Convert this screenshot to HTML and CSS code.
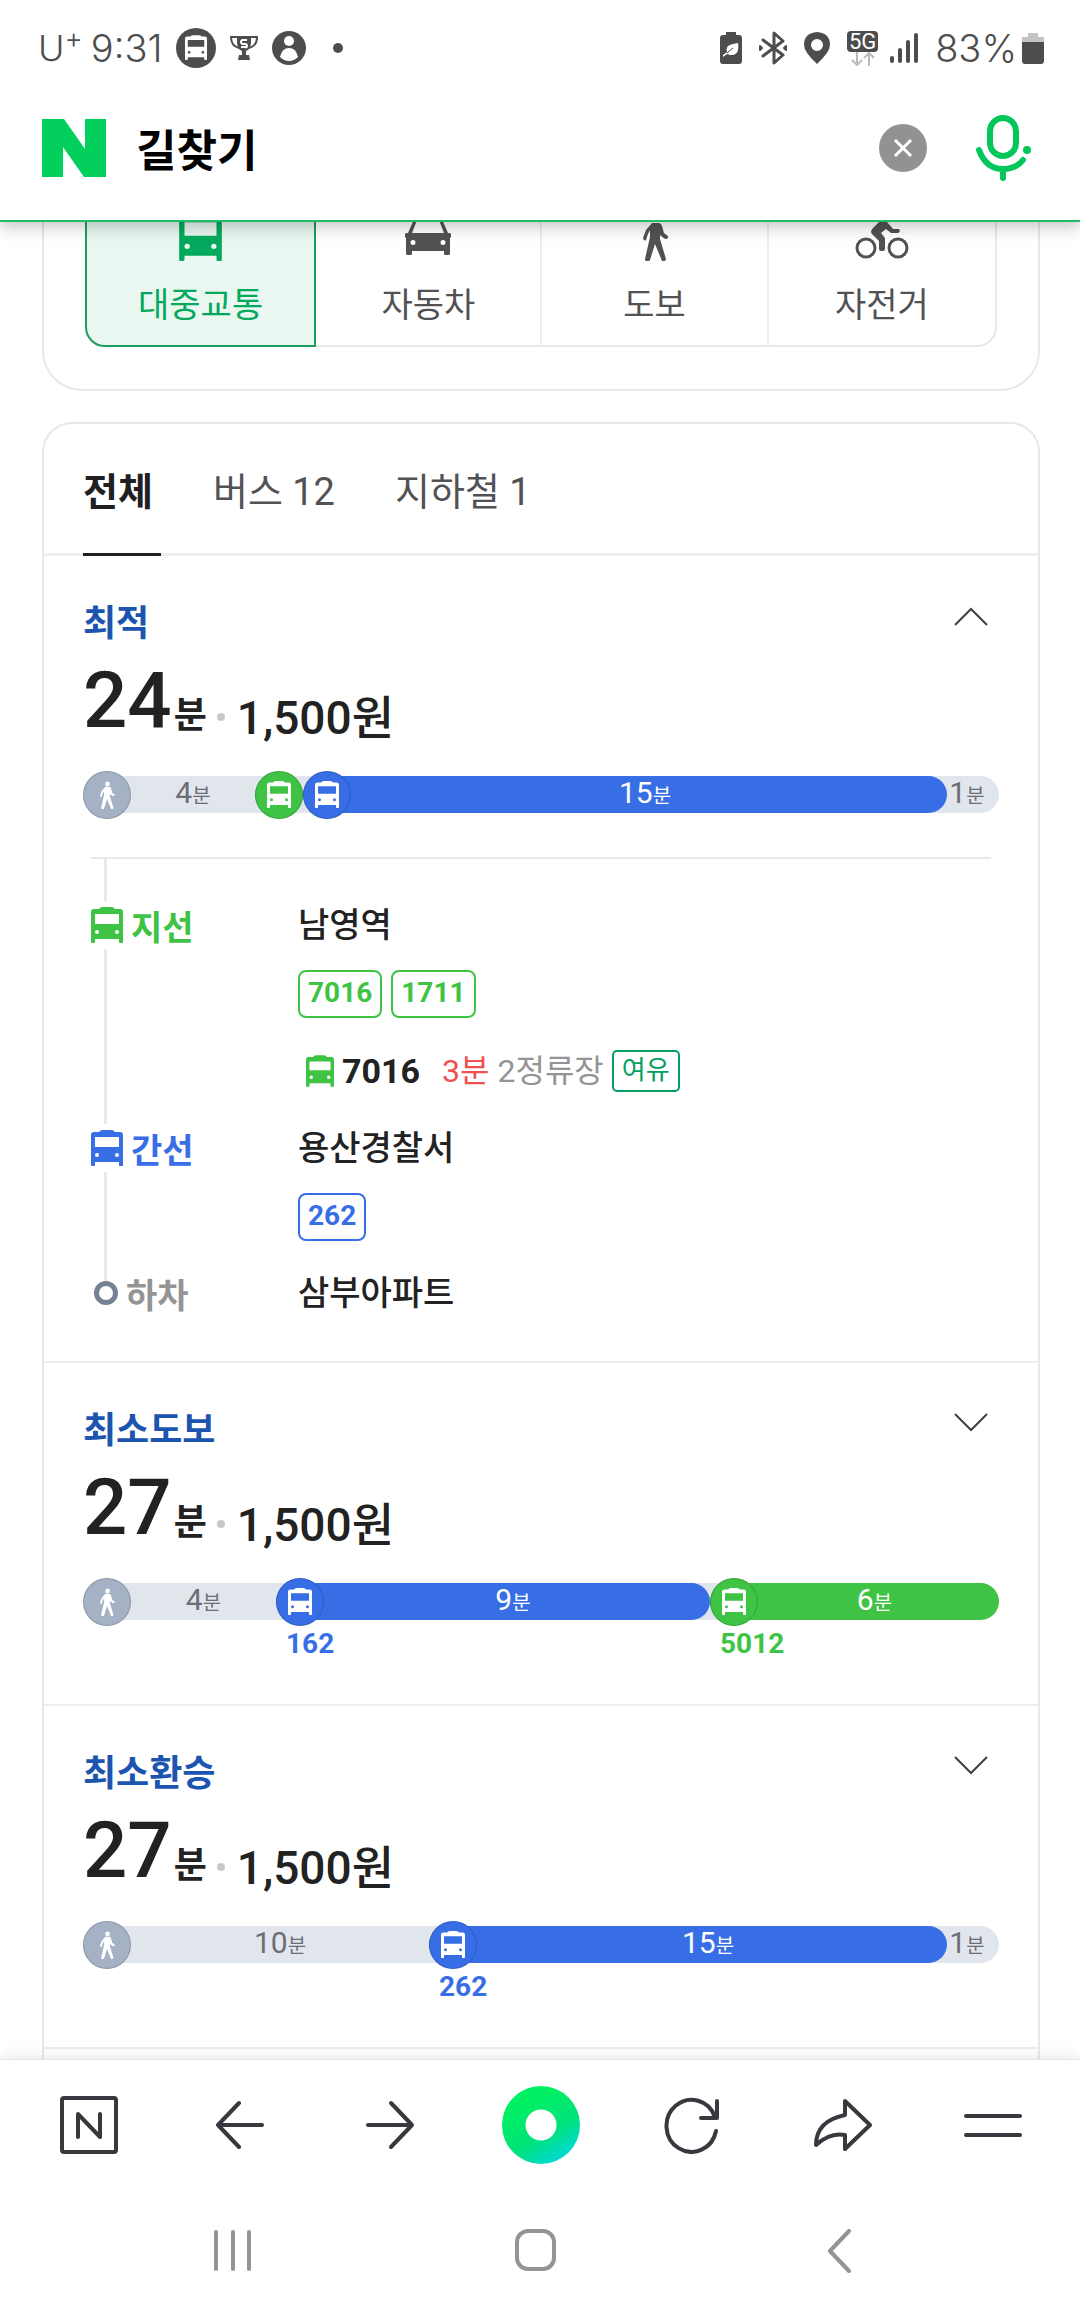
FILE: index.html
```
<!DOCTYPE html>
<html lang="ko">
<head>
  <meta charset="UTF-8">
  <meta name="viewport" content="width=device-width, initial-scale=1.0">
  <title>길찾기</title>
  <link rel="stylesheet" href="styles.css">
</head>
<body>
  <!-- Shared icons -->
  <svg class="sprite" aria-hidden="true">
    <symbol id="bus" viewBox="0 0 32 36">
      <path fill-rule="evenodd" d="M3 2h5q1-2 4-2h8q3 0 4 2h5q3 0 3 3v30q0 1-1 1h-2q-1 0-1-1v-3H4v3q0 1-1 1H1q-1 0-1-1V5q0-3 3-3zM4 7v10h24V7zM6 23a2 2 0 1 0 0 4a2 2 0 1 0 0-4zM26 23a2 2 0 1 0 0 4a2 2 0 1 0 0-4z"/>
    </symbol>
    <symbol id="walk" viewBox="0 0 26 48">
      <circle cx="14" cy="5" r="4"/>
      <path d="M10 10h7q2 0 3 3l2 7 4 3q1 1 0 2t-3 1l-4-3-1-1v4l6 20q0 2-2 2h-2l-7-17-5 16q0 1-2 1H4q-1 0-1-2l5-22v-7l-2 4-2 6q-1 1-2 0t-1-2l3-8z"/>
    </symbol>
    <symbol id="chevron" viewBox="0 0 34 32">
      <path d="M1 25L17 9l16 16" fill="none" stroke="currentColor" stroke-width="2"/>
    </symbol>
  </svg>

  <div class="app">
    <div class="status">
      <div class="status-left">
        <span class="carrier">U<sup>+</sup></span>
        <span class="time">9:31</span>
        <svg width="40" height="40" viewBox="0 0 40 40"><circle cx="20" cy="20" r="20"/><use href="#bus" x="9" y="7" width="22" height="25" fill="#fff"/></svg>
        <svg width="28" height="24" viewBox="0 0 28 24"><path d="M7 0h14v6q0 7-5 9v4h3l1 5H8l1-5h3v-4q-5-2-5-9z"/><path d="M7 1H1q0 9 8 11M21 1h6q0 9-8 11" fill="none" stroke="#4d4d4d" stroke-width="2"/><path d="M17 4h-4q-2 0-2 2t2 2h2q2 0 2 2t-2 1h-4" fill="none" stroke="#fff" stroke-width="2"/></svg>
        <svg width="34" height="34" viewBox="0 0 34 34"><circle cx="17" cy="17" r="17"/><circle cx="17" cy="10" r="5" fill="#fff"/><path d="M8 26q2-9 9-9t9 9q-4 4-9 4t-9-4z" fill="#fff"/></svg>
        <span class="dot"></span>
      </div>
      <div class="status-right">
        <svg width="22" height="32" viewBox="0 0 22 32"><path d="M6 0h10v3h3q3 0 3 3v23q0 3-3 3H3q-3 0-3-3V6q0-3 3-3h3z"/><path d="M18 11q2 13-8 12l-3-1-4 3v-2l4-3q-2-7 6-8z" fill="#fff"/><path d="M7 21l6-5" stroke="#4d4d4d"/></svg>
        <svg width="28" height="34" viewBox="0 0 28 34" fill="none" stroke="#4d4d4d" stroke-width="3" stroke-linecap="round" stroke-linejoin="round"><path d="M4 9l20 15-9 8V2l9 8L4 25"/><path d="M1 15l2 2-2 2zM27 15l-2 2 2 2z" stroke-width="2"/></svg>
        <svg width="26" height="32" viewBox="0 0 26 32"><path fill-rule="evenodd" d="M13 0q13 1 13 13 0 7-13 19Q0 20 0 13 0 1 13 0zM13 7a6 6 0 1 0 0 12a6 6 0 1 0 0-12z"/></svg>
        <span class="network">
          <b>5G</b>
          <svg width="24" height="14" viewBox="0 0 24 14" fill="none" stroke="#bbb" stroke-width="2"><path d="M6 0v12M1 8l5 5 5-5M18 14V2M13 6l5-5 5 5"/></svg>
        </span>
        <svg width="28" height="30" viewBox="0 0 28 30" fill="none" stroke="#4d4d4d" stroke-width="4" stroke-linecap="round"><path d="M2 25v3M10 17v11M18 9v19M26 2v26"/></svg>
        <span class="battery">83%<svg width="22" height="31" viewBox="0 0 22 31"><path d="M6 0h10v4h6v6H0V4h6z" fill="#c4c4c4"/><path d="M0 9h22v19q0 3-3 3H3q-3 0-3-3z"/></svg></span>
      </div>
    </div>

    <header class="search">
      <a class="logo" href="#" aria-label="NAVER"><svg width="64" height="58" viewBox="0 0 64 58"><path d="M0 0h22l21 30V0h21v58H42L21 28v30H0z" fill="#03cf5d"/></svg></a>
      <input class="search-input" type="text" value="길찾기" aria-label="검색어">
      <button class="clear" type="button" aria-label="지우기"><svg width="48" height="48" viewBox="0 0 48 48"><circle cx="24" cy="24" r="24" fill="#929294"/><path d="M16 16l16 16M32 16L16 32" stroke="#fff" stroke-width="3"/></svg></button>
      <button class="mic" type="button" aria-label="음성 검색"><svg width="56" height="68" viewBox="0 0 56 68" fill="none" stroke="#03c75a" stroke-width="6" stroke-linecap="round"><rect x="14" y="4" width="26" height="38" rx="13"/><path d="M3 36q7 19 24 19 13 0 20-9M27 55v9"/><circle cx="51" cy="36" r="4" fill="#03c75a" stroke="none"/></svg></button>
    </header>

    <main class="content">
      <section class="card mode-card">
        <div class="modes">
          <button class="mode active" type="button">
            <svg width="43" height="48"><use href="#bus"/></svg>대중교통
          </button>
          <button class="mode" type="button">
            <svg width="46" height="48" viewBox="0 0 46 48"><path fill-rule="evenodd" d="M10 4q1-2 4-2h18q3 0 4 2l7 16h2q1 0 1 2v2l-1 1v16q0 1-2 1h-3q-1 0-1-1v-3H7v3q0 1-1 1H3q-2 0-2-1V25l-1-1v-2q0-2 1-2h2zM12 7L7 20h32L34 7zM8 27a2 2 0 1 0 0 5a2 2 0 1 0 0-5zM38 27a2 2 0 1 0 0 5a2 2 0 1 0 0-5z"/></svg>자동차
          </button>
          <button class="mode" type="button">
            <svg width="26" height="48"><use href="#walk"/></svg>도보
          </button>
          <button class="mode" type="button">
            <svg width="54" height="48" viewBox="0 0 54 48"><g fill="none" stroke="#525254" stroke-width="3"><circle cx="11" cy="35" r="9"/><circle cx="43" cy="35" r="9"/></g><circle cx="33" cy="3" r="4"/><path d="M24 9q4-4 8 0l6 7h6q2 3-1 4h-7l-5-4-5 4 4 5v11q0 2-2 2h-2q-2 0-2-2v-8l-6-6q-4-3 0-7z"/></svg>자전거
          </button>
        </div>
      </section>

      <section class="card results">
        <div class="tabs" role="tablist">
          <button class="tab active" role="tab" aria-selected="true" type="button">전체</button>
          <button class="tab" role="tab" type="button">버스 12</button>
          <button class="tab" role="tab" type="button">지하철 1</button>
        </div>

        <article class="route open">
          <div class="route-head">
            <h2>최적</h2>
            <button class="toggle" type="button" aria-label="접기"><svg width="34" height="32"><use href="#chevron"/></svg></button>
          </div>
          <div class="summary">
            <strong>24</strong><span class="unit">분</span><i></i><span class="fare">1,500원</span>
          </div>
          <div class="timeline" style="--cols: 172fr 48fr 644fr 52fr">
            <div class="bar">
              <div class="seg walk"><span class="pin"><svg width="16" height="28"><use href="#walk"/></svg></span><span class="min">4<small>분</small></span></div>
              <div class="seg green"><span class="pin"><svg width="24" height="27"><use href="#bus"/></svg></span></div>
              <div class="seg blue"><span class="pin"><svg width="24" height="27"><use href="#bus"/></svg></span><span class="min">15<small>분</small></span></div>
              <div class="seg last"><span class="min">1<small>분</small></span></div>
            </div>
          </div>

          <ol class="steps">
            <li class="step">
              <div class="kind green-text">
                <span class="kind-name"><svg width="32" height="36"><use href="#bus"/></svg>지선</span>
              </div>
              <div class="stop">
                <h3>남영역</h3>
                <div class="numbers green-text"><span>7016</span><span>1711</span></div>
                <p class="arrival">
                  <svg width="28" height="32"><use href="#bus"/></svg>
                  <b>7016</b>
                  <em>3분</em>
                  <span>2정류장</span>
                  <span class="seat">여유</span>
                </p>
              </div>
            </li>
            <li class="step transfer">
              <div class="kind blue-text">
                <span class="kind-name"><svg width="32" height="36"><use href="#bus"/></svg>간선</span>
              </div>
              <div class="stop">
                <h3>용산경찰서</h3>
                <div class="numbers blue-text"><span>262</span></div>
              </div>
            </li>
            <li class="step end">
              <div class="kind">
                <span class="kind-name">하차</span>
              </div>
              <div class="stop">
                <h3>삼부아파트</h3>
              </div>
            </li>
          </ol>
        </article>

        <article class="route">
          <div class="route-head">
            <h2>최소도보</h2>
            <button class="toggle" type="button" aria-label="펼치기"><svg width="34" height="32"><use href="#chevron"/></svg></button>
          </div>
          <div class="summary">
            <strong>27</strong><span class="unit">분</span><i></i><span class="fare">1,500원</span>
          </div>
          <div class="timeline" style="--cols: 193fr 434fr 289fr">
            <div class="bar">
              <div class="seg walk"><span class="pin"><svg width="16" height="28"><use href="#walk"/></svg></span><span class="min">4<small>분</small></span></div>
              <div class="seg blue"><span class="pin"><svg width="24" height="27"><use href="#bus"/></svg></span><span class="min">9<small>분</small></span></div>
              <div class="seg green"><span class="pin"><svg width="24" height="27"><use href="#bus"/></svg></span><span class="min">6<small>분</small></span></div>
            </div>
            <div class="lines">
              <span></span>
              <span class="blue-text">162</span>
              <span class="green-text">5012</span>
            </div>
          </div>
        </article>

        <article class="route">
          <div class="route-head">
            <h2>최소환승</h2>
            <button class="toggle" type="button" aria-label="펼치기"><svg width="34" height="32"><use href="#chevron"/></svg></button>
          </div>
          <div class="summary">
            <strong>27</strong><span class="unit">분</span><i></i><span class="fare">1,500원</span>
          </div>
          <div class="timeline" style="--cols: 346fr 518fr 52fr">
            <div class="bar">
              <div class="seg walk"><span class="pin"><svg width="16" height="28"><use href="#walk"/></svg></span><span class="min">10<small>분</small></span></div>
              <div class="seg blue"><span class="pin"><svg width="24" height="27"><use href="#bus"/></svg></span><span class="min">15<small>분</small></span></div>
              <div class="seg last"><span class="min">1<small>분</small></span></div>
            </div>
            <div class="lines">
              <span></span>
              <span class="blue-text">262</span>
            </div>
          </div>
        </article>
      </section>
    </main>

    <footer class="footer">
      <nav class="toolbar">
        <button type="button" aria-label="네이버 홈"><svg width="58" height="58" viewBox="0 0 58 58"><rect x="2" y="2" width="54" height="54" rx="2"/><path d="M18 41V18l22 23V18"/></svg></button>
        <button type="button" aria-label="뒤로"><svg width="50" height="50" viewBox="0 0 50 50"><path d="M24 3L3 25l21 22M3 25h44"/></svg></button>
        <button type="button" aria-label="앞으로"><svg width="50" height="50" viewBox="0 0 50 50"><path d="M26 3l21 22-21 22M47 25H3"/></svg></button>
        <button class="green-dot" type="button" aria-label="그린닷"><span></span></button>
        <button type="button" aria-label="새로고침"><svg width="58" height="58" viewBox="0 0 58 58"><path d="M53 35A25 26 0 1 1 52 21M54 5v17H38"/></svg></button>
        <button type="button" aria-label="공유"><svg width="60" height="54" viewBox="0 0 60 54"><path d="M33 3l25 24-25 24V37Q18 34 4 47 4 23 33 17z"/></svg></button>
        <button type="button" aria-label="메뉴"><svg width="60" height="58" viewBox="0 0 60 58"><path d="M3 20h54M3 39h54"/></svg></button>
      </nav>
      <nav class="system">
        <button type="button" aria-label="최근 앱"><svg width="40" height="44" viewBox="0 0 40 44"><path d="M3 3v37M20 3v37M36 3v37"/></svg></button>
        <button type="button" aria-label="홈"><svg width="44" height="44" viewBox="0 0 44 44"><rect x="3" y="2" width="37" height="38" rx="11"/></svg></button>
        <button type="button" aria-label="이전"><svg width="24" height="44" viewBox="0 0 24 44"><path d="M22 2L3 22l19 20"/></svg></button>
      </nav>
    </footer>
  </div>
</body>
</html>
```

FILE: styles.css
```
*, *::before, *::after {
  box-sizing: border-box;
}
body {
  margin: 0;
  font-family: Roboto, "Noto Sans CJK KR", sans-serif;
  background: #fff;
  color: #222;
}
button {
  border: 0;
  padding: 0;
  background: none;
  font: inherit;
  color: inherit;
  cursor: pointer;
}
svg {
  display: block;
  flex: none;
}
svg:not([fill]) {
  fill: currentColor;
}
h2, h3, p, ol {
  margin: 0;
  padding: 0;
}
.sprite {
  position: absolute;
  width: 0;
  height: 0;
}
.app {
  display: flex;
  flex-direction: column;
  min-height: 100vh;
}

/* Status bar */
.status {
  position: relative;
  z-index: 2;
  display: flex;
  justify-content: space-between;
  padding: 20px 36px 0 38px;
  background: #fff;
  color: #4d4d4d;
  font-family: Inter, sans-serif;
  font-size: 38px;
  font-weight: 300;
  line-height: 56px;
}
.status-left, .status-right {
  display: flex;
  align-items: center;
}
.status-left {
  gap: 14px;
}
.status-right {
  gap: 17px;
}
.carrier {
  margin-right: -6px;
  font-size: 36px;
}
.carrier sup {
  font-size: 28px;
  line-height: 0;
}
.dot {
  width: 10px;
  height: 10px;
  margin-left: 13px;
  border-radius: 50%;
  background: #4d4d4d;
}
.network {
  display: flex;
  flex-direction: column;
  align-items: center;
  margin-right: -5px;
}
.network b {
  width: 31px;
  border-radius: 4px;
  background: #4d4d4d;
  color: #fff;
  font-family: Roboto, sans-serif;
  font-size: 22px;
  line-height: 21px;
  text-align: center;
}
.battery {
  display: flex;
  align-items: center;
  gap: 5px;
}

/* Search header */
.search {
  position: relative;
  z-index: 1;
  display: flex;
  align-items: center;
  height: 146px;
  padding: 0 48px 0 42px;
  background: #fff;
  border-bottom: 2px solid #20bb67;
  box-shadow: 0 4px 16px rgba(0, 0, 0, 0.25);
}
.search-input {
  flex: 1;
  min-width: 0;
  padding: 0 0 0 30px;
  border: 0;
  outline: 0;
  background: none;
  color: #000;
  font: inherit;
  font-size: 44px;
  font-weight: 700;
}
.mic {
  margin-left: 49px;
}

/* Page content */
.content {
  display: flex;
  flex: 1;
  flex-direction: column;
  overflow: hidden;
}
.card {
  margin: 0 40px 0 42px;
  border: 2px solid #e8e8e8;
  border-radius: 30px;
}
/* upper part is scrolled under the header */
.mode-card {
  margin-top: -80px;
  margin-bottom: 31px;
  padding: 39px 41px 42px;
  border-radius: 40px;
}
.results {
  flex: 1;
  border-bottom: 0;
  border-radius: 30px 30px 0 0;
}
.modes {
  display: grid;
  grid-template-columns: 230fr 227fr 227fr 227fr;
  border: 2px solid #e8e8e8;
  border-radius: 20px;
}
.mode {
  display: flex;
  flex-direction: column;
  align-items: center;
  gap: 22px;
  padding: 28px 0 18px;
  border-right: 2px solid #eee;
  color: #525254;
  font-size: 34px;
  line-height: 44px;
}
.mode:last-child {
  border-right: 0;
}
.mode.active {
  margin: -2px 0 -2px -2px;
  border: 2px solid #1b9e60;
  border-radius: 20px 0 0 20px;
  background: #e9f7f0;
  color: #03a95c;
}

.tabs {
  display: flex;
  gap: 52px;
  height: 132px;
  padding-left: 39px;
  box-shadow: inset 0 -3px #eee;
}
.tab {
  padding: 0 8px 0 0;
  border-bottom: 3px solid transparent;
  color: #525254;
  font-size: 38px;
}
.tab.active {
  border-color: #202022;
  color: #202022;
  font-weight: 700;
}

/* Route */
.route {
  padding: 44px 39px 42px;
  border-bottom: 2px solid #eee;
}
.route.open {
  padding-bottom: 58px;
}
.route-head {
  display: flex;
  justify-content: space-between;
  align-items: flex-start;
}
.route-head h2 {
  color: #1c55b0;
  font-size: 36px;
  font-weight: 700;
  line-height: 48px;
}
.toggle {
  margin-right: 11px;
  color: #404040;
  transform: rotate(180deg);
}
.open .toggle {
  transform: none;
}
.summary {
  display: flex;
  align-items: flex-end;
  height: 80px;
  margin-top: 13px;
  font-weight: 500;
}
.summary strong {
  font-size: 78px;
  font-weight: 500;
  line-height: 80px;
}
.summary .unit {
  margin-left: 2px;
  font-size: 36px;
  font-weight: 700;
  line-height: 50px;
}
.summary i {
  width: 8px;
  height: 8px;
  margin: 0 12px 20px 10px;
  border-radius: 50%;
  background: #c8c8c8;
}
.summary .fare {
  font-size: 46px;
  line-height: 46px;
}
.timeline {
  margin-top: 35px;
}
.bar, .lines {
  display: grid;
  grid-template-columns: var(--cols);
}
.bar {
  height: 37px;
  border-radius: 20px;
  background: #e1e6ed;
}
.seg {
  display: flex;
  align-items: center;
  height: 37px;
  border-radius: 20px;
  color: #fff;
}
.seg.walk, .seg.last {
  color: #6b6e75;
}
.seg.last {
  padding-right: 12px;
}
.seg.green, .green .pin {
  background: #3ec344;
}
.seg.blue, .blue .pin {
  background: #376ee6;
}
.pin {
  display: flex;
  flex: none;
  align-items: center;
  justify-content: center;
  width: 48px;
  height: 48px;
  border: 1px solid rgba(0, 0, 0, 0.15);
  border-radius: 50%;
  color: #fff;
}
.walk .pin {
  background: #a5b1c5;
}
.blue .pin, .green .pin {
  margin-right: -8px;
}
.min {
  flex: 1;
  font-size: 30px;
  line-height: 36px;
  text-align: center;
}
.min small {
  font-size: 20px;
}
.lines {
  margin-top: 6px;
  font-size: 28px;
  font-weight: 700;
  line-height: 36px;
}
.lines span {
  padding-left: 10px;
}
.green-text {
  color: #3ec344;
}
.blue-text {
  color: #376ee6;
}

/* Steps */
.steps {
  margin: 44px 8px 0;
  border-top: 2px solid #e8e8e8;
  list-style: none;
}
.step {
  display: flex;
}
.kind {
  display: flex;
  flex-direction: column;
  width: 207px;
}
.kind::after,
.step:first-child .kind::before {
  content: "";
  flex: 1;
  width: 3px;
  margin-left: 13px;
  background: #e8e8e8;
}
.step:first-child .kind::before {
  flex: none;
  height: 42px;
}
.step:first-child .stop {
  padding-top: 42px;
}
.kind-name {
  display: flex;
  align-items: center;
  gap: 8px;
  height: 48px;
  font-size: 34px;
  font-weight: 700;
}
.stop {
  padding-bottom: 32px;
}
.stop h3 {
  font-size: 34px;
  font-weight: 500;
  line-height: 48px;
}
.numbers {
  display: flex;
  gap: 9px;
  margin-top: 21px;
  font-size: 28px;
  font-weight: 700;
}
.numbers span {
  height: 48px;
  padding: 0 8px;
  border: 2px solid;
  border-radius: 8px;
  line-height: 42px;
}
.arrival {
  display: flex;
  align-items: center;
  gap: 8px;
  margin-top: 32px;
  padding-left: 8px;
  color: #949496;
  font-size: 32px;
  line-height: 42px;
}
.arrival svg {
  color: #3ec344;
}
.arrival b {
  margin-right: 14px;
  color: #222;
  font-size: 34px;
}
.arrival em {
  color: #f05050;
  font-style: normal;
}
.arrival .seat {
  height: 42px;
  padding: 0 8px;
  border: 2px solid #03a060;
  border-radius: 5px;
  color: #03a060;
  font-size: 26px;
  line-height: 36px;
}
.transfer .stop {
  padding-bottom: 42px;
}
.end .kind::after {
  display: none;
}
.end .kind-name {
  height: 20px;
  padding-left: 3px;
  color: #949496;
}
.end .kind-name::before {
  content: "";
  width: 24px;
  height: 24px;
  border: 5px solid #758195;
  border-radius: 50%;
}
.end h3 {
  line-height: 20px;
}
.end .stop {
  padding-bottom: 0;
}

/* Bottom bars */
.footer {
  position: relative;
  z-index: 1;
  background: #fff;
  border-top: 1px solid #e5e7ea;
  box-shadow: 0 -4px 12px rgba(90, 110, 130, 0.12);
}
.toolbar {
  display: grid;
  grid-template-columns: repeat(7, 1fr);
  height: 130px;
  padding: 0 12px 0 14px;
}
.toolbar button, .system button {
  display: flex;
  align-items: center;
  justify-content: center;
}
.footer svg {
  fill: none;
  stroke: #37393e;
  stroke-width: 4;
  stroke-linecap: round;
  stroke-linejoin: round;
}
.green-dot span {
  width: 78px;
  height: 78px;
  border-radius: 50%;
  background: radial-gradient(#fff 15px, transparent 16px), linear-gradient(150deg, #00f064 25%, #00e27a 60%, #00d8e0 90%);
}
.system {
  display: grid;
  grid-template-columns: repeat(3, 1fr);
  height: 126px;
  padding: 0 90px 4px 82px;
}
.footer .system svg {
  stroke: #949494;
}
```
